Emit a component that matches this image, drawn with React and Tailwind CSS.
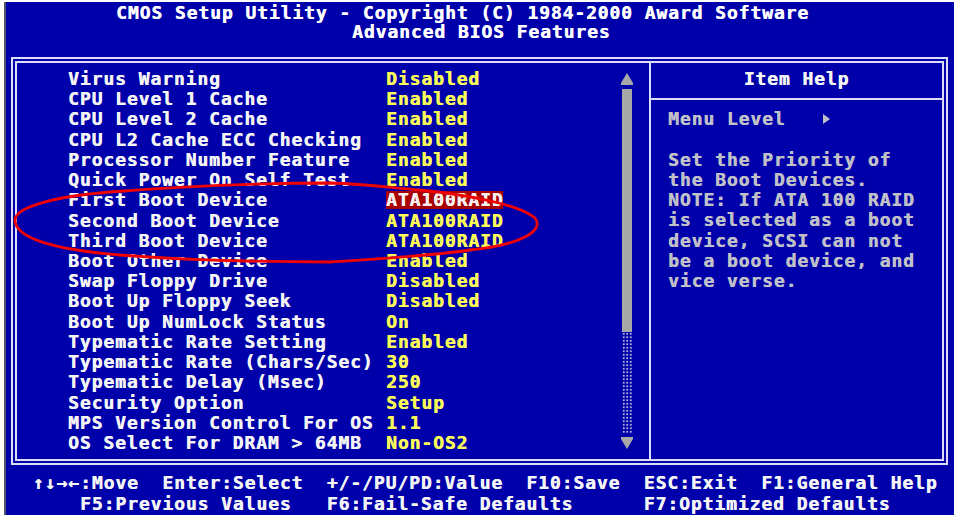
const items = [
  ['Virus Warning', 'Disabled'],
  ['CPU Level 1 Cache', 'Enabled'],
  ['CPU Level 2 Cache', 'Enabled'],
  ['CPU L2 Cache ECC Checking', 'Enabled'],
  ['Processor Number Feature', 'Enabled'],
  ['Quick Power On Self Test', 'Enabled'],
  ['First Boot Device', 'ATA100RAID', true],
  ['Second Boot Device', 'ATA100RAID'],
  ['Third Boot Device', 'ATA100RAID'],
  ['Boot Other Device', 'Enabled'],
  ['Swap Floppy Drive', 'Disabled'],
  ['Boot Up Floppy Seek', 'Disabled'],
  ['Boot Up NumLock Status', 'On'],
  ['Typematic Rate Setting', 'Enabled'],
  ['Typematic Rate (Chars/Sec)', '30'],
  ['Typematic Delay (Msec)', '250'],
  ['Security Option', 'Setup'],
  ['MPS Version Control For OS', '1.1'],
  ['OS Select For DRAM > 64MB', 'Non-OS2'],
];

const help = [
  'Set the Priority of',
  'the Boot Devices.',
  'NOTE: If ATA 100 RAID',
  'is selected as a boot',
  'device, SCSI can not',
  'be a boot device, and',
  'vice verse.',
];

/** Fila de opción: etiqueta blanca + valor amarillo */
function SettingRow({ label, value, selected }) {
  return (
    <div className="h-[20.22px] leading-[20.22px] flex items-center">
      <span className="w-[318px] shrink-0 text-[#f4f4f4]">{label}</span>
      {selected ? (
        <span className="inline-block h-[18px] leading-[18px] bg-[#a80000] text-[#f8f0f0]">{value}</span>
      ) : (
        <span className="text-[#fcfc58]">{value}</span>
      )}
    </div>
  );
}

/** Barra de desplazamiento estilo BIOS */
function ScrollBar() {
  return (
    <div className="w-[12px] shrink-0 pt-[6px] flex flex-col">
      <div className="h-[20.22px] flex items-center justify-center">
        <svg width="12" height="12" viewBox="0 0 12 12">
          <polygon points="6,0 12,10 12,12 0,12 0,10" fill="#a8a8a8" />
        </svg>
      </div>
      <div className="h-[242.6px] w-[10px] ml-[1.5px] bg-[#a8a8a8]" />
      <div className="h-[101.1px] w-[10px] ml-[1.5px] bg-[radial-gradient(circle,#b4b4dc_1px,transparent_1.4px)] bg-[length:3.5px_3.5px]" />
      <div className="h-[20.22px] flex items-center justify-center">
        <svg width="12" height="12" viewBox="0 0 12 12">
          <polygon points="0,0 12,0 12,2 6,12 0,2" fill="#a8a8a8" />
        </svg>
      </div>
    </div>
  );
}

export default function App() {
  return (
    <div className="relative w-[954px] h-[515px] bg-white overflow-hidden font-['DejaVu_Sans_Mono','Liberation_Mono',monospace] font-bold text-[18px] tracking-[0.91px] whitespace-pre [text-shadow:0.5px_0_0_currentColor]">
      <div className="ml-[4px] mt-[2px] w-[950px] h-[513px] border-l-2 border-[#56566a] bg-[#0000aa]">
        {/* Título */}
        <div className="pt-[1px] leading-[19px] text-white">
          <div className="pl-[110px]">CMOS Setup Utility - Copyright (C) 1984-2000 Award Software</div>
          <div className="pl-[346px]">Advanced BIOS Features</div>
        </div>

        {/* Marco doble */}
        <div className="mt-[16px] ml-[5px] w-[937px] h-[408px] border-2 border-[#dcdcf8] p-[2px]">
          <div className="h-full border-2 border-[#dcdcf8] flex">
            <div className="w-[632px] shrink-0 flex">
              <div className="w-[603.5px] shrink-0 pl-[51px] pt-[6px]">
                {items.map(([label, value, selected]) => (
                  <SettingRow key={label} label={label} value={value} selected={selected} />
                ))}
              </div>
              <ScrollBar />
            </div>
            <div className="w-[2px] shrink-0 bg-[#dcdcf8]" />
            <div className="flex-1 flex flex-col">
              <div className="h-[35px] pt-[6px]">
                <div className="h-[20.22px] leading-[20.22px] text-center text-[#f4f4f4]">Item Help</div>
              </div>
              <div className="h-[2px] bg-[#dcdcf8]" />
              <div className="pt-[9.3px] pl-[17px] text-[#c0c0c8]">
                <div className="h-[20.22px] leading-[20.22px] flex items-center">
                  <span>Menu Level   </span>
                  <svg width="8" height="10" viewBox="0 0 8 10" className="ml-[2px]">
                    <polygon points="0,0 7,5 0,10" fill="#c0c0c8" />
                  </svg>
                </div>
                <div className="h-[20.22px]" />
                {help.map((line) => (
                  <div key={line} className="h-[20.22px] leading-[20.22px]">{line}</div>
                ))}
              </div>
            </div>
          </div>
        </div>

        {/* Pie */}
        <div className="mt-[8.3px] pl-[27px] text-[#f4f4f4]">
          <div className="h-[20.22px] leading-[20.22px]">{'↑↓→←:Move  Enter:Select  +/-/PU/PD:Value  F10:Save  ESC:Exit  F1:General Help'}</div>
          <div className="h-[20.22px] leading-[20.22px]">{'    F5:Previous Values   F6:Fail-Safe Defaults      F7:Optimized Defaults'}</div>
        </div>
      </div>

      {/* Anotación: elipse roja a mano */}
      <svg className="absolute inset-0 pointer-events-none" width="954" height="515" viewBox="0 0 954 515">
        <path
          d="M15,221 C14,206 60,196 110,192 C160,188 250,183 330,183 C370,184 392,188 420,190 C470,195 520,205 535,218 C545,231 520,245 470,250 C430,256 390,258 330,262 C260,262 200,261 120,255 C60,250 17,240 15,221 Z"
          fill="none"
          stroke="#f00000"
          strokeWidth="2.8"
        />
      </svg>
    </div>
  );
}
